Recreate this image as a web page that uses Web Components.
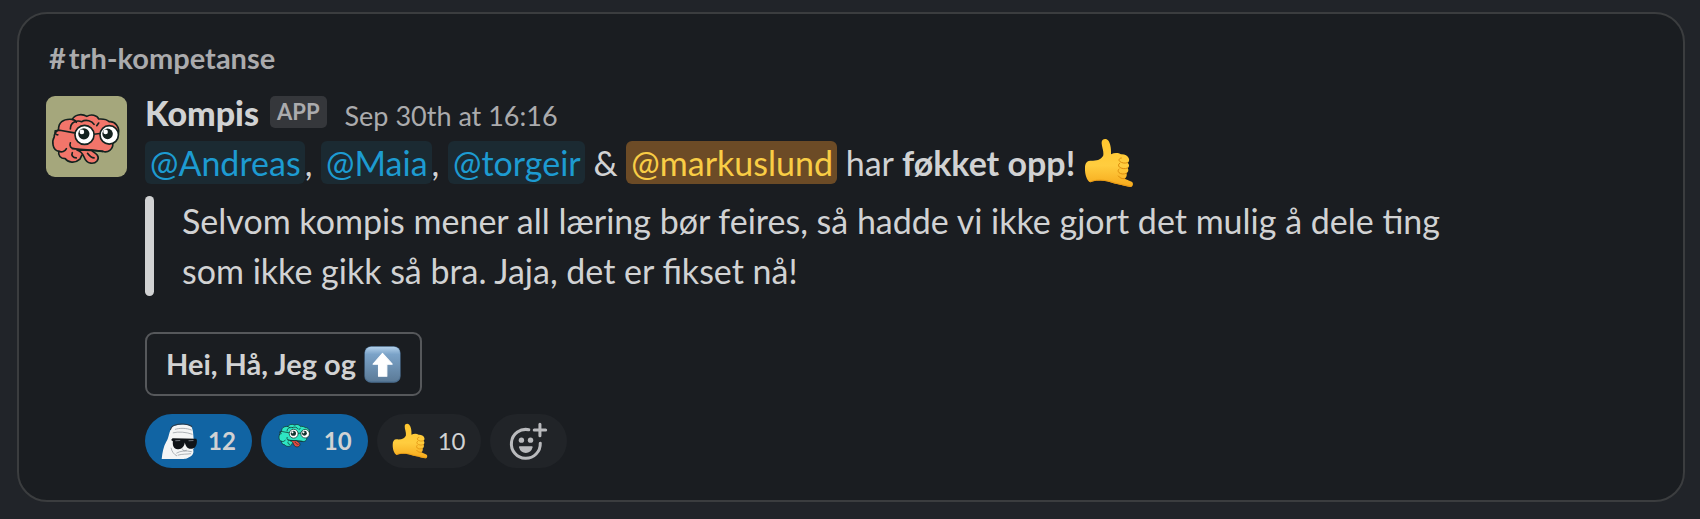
<!DOCTYPE html>
<html lang="no">
<head>
<meta charset="utf-8">
<meta name="viewport" content="width=device-width, initial-scale=1">
<title>#trh-kompetanse</title>
<style>
    body {
        margin: 0;
        padding: 12px 15px 18px 17px;
        background: #212429;
        color: #d1d2d3;
        font-family: Lato, "Liberation Sans", sans-serif;
        font-size: 34px;
        line-height: 50px;
    }
</style>
</head>
<body>

<kompis-card>
    <kompis-channel slot="channel" name="trh-kompetanse"></kompis-channel>
    <kompis-message author="Kompis" time="Sep 30th at 16:16">
        <kompis-mention>@Andreas</kompis-mention>, <kompis-mention>@Maia</kompis-mention>, <kompis-mention>@torgeir</kompis-mention> &amp; <kompis-mention me>@markuslund</kompis-mention> har <b>føkket opp!</b> <kompis-emoji name="shaka"></kompis-emoji>
        <kompis-quote slot="quote">Selvom kompis mener all læring bør feires, så hadde vi ikke gjort det mulig å dele ting som ikke gikk så bra. Jaja, det er fikset nå!</kompis-quote>
        <kompis-button slot="actions">Hei, Hå, Jeg og <kompis-emoji name="arrow"></kompis-emoji></kompis-button>
        <kompis-reaction slot="reactions" emoji="cool" count="12" active></kompis-reaction>
        <kompis-reaction slot="reactions" emoji="brain" count="10" active></kompis-reaction>
        <kompis-reaction slot="reactions" emoji="shaka" count="10"></kompis-reaction>
        <kompis-reaction slot="reactions" emoji="add"></kompis-reaction>
    </kompis-message>
</kompis-card>

<script>
// body of the brain, shared by the avatar and the small reaction
const brain = (fill, line, tongue) => `
    <g stroke="${line}" stroke-width="5" stroke-linejoin="round" stroke-linecap="round">
        <path fill="${fill}" d="M43 140C43 128 50 122 56 118C56 98 68 84 98 87C104 73 126 68 142 78C154 70 174 74 178 86C192 85 204 88 210 94C228 92 242 110 238 130C236 146 226 156 221 160C222 178 206 190 190 184L158 181C138 184 124 194 121 208C106 222 84 218 76 206C62 206 54 196 57 184C36 180 36 152 43 140Z"/>
        <path fill="${tongue}" d="M112 180C126 184 130 192 134 202C138 213 145 219 154 220C170 222 182 208 174 196C168 188 160 186 156 181Z"/>
        <path fill="none" d="M98 87C104 88 108 92 110 96M92 116C92 96 112 88 126 94M126 94C140 86 158 92 164 102M178 98L172 106M57 184C66 188 76 184 80 176M92 158C88 168 94 176 104 176M98 176C122 178 160 180 190 184M144 190C150 198 158 204 164 204M98 188C94 196 100 204 110 204"/>
        <path fill="none" d="M46 122L60 120L104 128M46 122C44 128 48 134 54 134M163 132L182 130"/>
    </g>
    <g stroke="${line}" stroke-width="5">
        <circle cx="135" cy="134" r="29" fill="#fff"/>
        <circle cx="210" cy="134" r="28" fill="#fff"/>
    </g>
    <circle cx="133" cy="131" r="17" fill="${line}"/>
    <circle cx="205" cy="131" r="16" fill="${line}"/>
    <circle cx="127" cy="125" r="7" fill="#fff"/>
    <circle cx="199" cy="125" r="7" fill="#fff"/>
`;

const icons = {
    avatar: `<svg viewBox="18 16 246 246"><rect x="18" y="16" width="246" height="246" fill="#a5a77c"/>${brain('#f2756a', '#14221f', '#f2756a')}</svg>`,

    brain: `<svg viewBox="26 64 242 242">${brain('#2ee6c3', '#12332f', '#e9483f')}</svg>`,

    shaka: `<svg viewBox="43 20 150 150">
        <defs>
            <linearGradient id="skin" x1="0" y1="0" x2="0" y2="1">
                <stop offset="0" stop-color="#ffc62e"/>
                <stop offset=".55" stop-color="#ffcd3f"/>
                <stop offset="1" stop-color="#f6a91c"/>
            </linearGradient>
        </defs>
        <path fill="url(#skin)" d="M96 32C97 22 109 20 115 27C122 35 125 50 124 69C134 64 146 64 154 69C164 68 174 73 177 80C180 86 178 92 174 94C180 99 179 107 174 110C178 116 176 123 170 126C173 131 171 138 165 142L186 151C193 155 190 167 182 167C170 167 157 161 146 159C128 156 115 149 100 148C84 147 72 148 62 153C52 149 45 129 46 109C46 96 52 87 63 88C82 90 96 84 101 72C103 58 95 44 96 32Z"/>
        <path fill="none" stroke="#dd8d0c" stroke-width="3" stroke-linecap="round" d="M174 94C165 97 156 95 150 90C146 86 149 80 155 80M174 110C165 114 155 112 149 107C145 103 146 98 150 96M170 126C162 130 153 128 148 124C144 120 145 116 148 113M165 142C157 143 150 140 146 134"/>
        <path fill="none" stroke="#e99a14" stroke-width="3" stroke-linecap="round" d="M62 151C74 146 88 146 102 147C118 148 132 155 148 158L182 165"/>
    </svg>`,

    arrow: `<svg viewBox="0 0 110 110">
        <defs>
            <linearGradient id="tile" x1="0" y1="0" x2="0" y2="1">
                <stop offset="0" stop-color="#b4d2ec"/>
                <stop offset=".22" stop-color="#7ba3c8"/>
                <stop offset="1" stop-color="#5c7b98"/>
            </linearGradient>
        </defs>
        <rect x="1" y="1" width="108" height="108" rx="20" fill="#4c6f90"/>
        <rect x="3" y="2" width="104" height="103" rx="18" fill="url(#tile)"/>
        <path fill="#fff" stroke="#fff" stroke-width="3" stroke-linejoin="round" d="M55 22L84 54H68V90H43V54H27Z"/>
    </svg>`,

    cool: `<svg viewBox="63 56 106 106">
        <path fill="#f4f5f5" d="M65 159C67 140 70 124 78 110C86 98 86 80 94 68C104 59 136 57 149 65C156 74 155 88 157 104C162 116 159 126 155 132C159 144 150 153 138 157C130 160 124 159 116 159Z"/>
        <g fill="none" stroke="#8f959a" stroke-width="2" stroke-linecap="round">
            <path d="M104 74C116 70 136 70 150 76M98 84C112 80 136 82 152 88M108 142C118 136 134 134 150 138M112 148C124 144 138 146 148 144M92 128C94 138 100 146 108 150M124 130L128 136L136 134"/>
        </g>
        <path fill="none" stroke="#2b3a48" stroke-width="3" d="M90 76C92 68 96 64 104 62C114 58 138 57 152 66"/>
        <path fill="#101418" d="M92 105L96 100L164 101L166 106C166 122 160 130 148 130C138 130 134 122 131 112C130 124 122 132 111 131C99 130 96 121 97 108Z"/>
        <path fill="none" stroke="#70767c" stroke-width="3" d="M104 107L118 106M142 107L156 106"/>
    </svg>`,

    add: `<svg viewBox="420 43 116 116">
        <g fill="none" stroke="#b9babd" stroke-width="9" stroke-linecap="round">
            <path d="M479 66A43 43 0 1 0 513 106"/>
            <path d="M512 50V84M495 67H529"/>
        </g>
        <g fill="#b9babd">
            <circle cx="457" cy="97" r="8"/>
            <circle cx="484" cy="97" r="8"/>
            <path d="M452 115H488Q491 115 490 119C487 130 480 135 470 135C460 135 453 130 450 119Q449 115 452 115Z"/>
        </g>
    </svg>`
};

class KompisElement extends HTMLElement {
    constructor() {
        super();
        this.attachShadow({ mode: 'open' });
    }

    connectedCallback() {
        this.shadowRoot.innerHTML = this.render().trim();
    }
}

class KompisCard extends KompisElement {
    render() {
        return `
            <style>
                :host {
                    display: block;
                    padding: 26px 27px 32px;
                    border: 2px solid #3b3d3f;
                    border-radius: 30px;
                    background: #1a1d21;
                }
            </style>
            <slot name="channel"></slot>
            <slot></slot>
        `;
    }
}

class KompisChannel extends KompisElement {
    render() {
        return `
            <style>
                :host {
                    display: block;
                    margin-bottom: 17px;
                    padding-left: 3px;
                    font-size: 29px;
                    font-weight: 700;
                    line-height: 36px;
                }
                a {
                    display: inline-flex;
                    gap: 3px;
                    color: #ababad;
                    text-decoration: none;
                }
            </style>
            <a href="#"><span>#</span><span>${this.getAttribute('name')}</span></a>
        `;
    }
}

class KompisMessage extends KompisElement {
    render() {
        return `
            <style>
                :host {
                    display: grid;
                    grid-template-columns: 81px minmax(0, 1fr);
                    column-gap: 18px;
                }
                .avatar {
                    height: 81px;
                    margin-top: 3px;
                    border-radius: 9px;
                    overflow: hidden;
                }
                .avatar svg {
                    display: block;
                }
                header {
                    display: flex;
                    align-items: baseline;
                    height: 45px;
                    line-height: 40px;
                }
                .author {
                    color: #d1d2d3;
                    font-weight: 900;
                    text-decoration: none;
                }
                .badge {
                    align-self: flex-start;
                    margin: 3px 18px 0 11px;
                    padding: 0 7px;
                    border-radius: 5px;
                    background: #35373b;
                    color: #ababad;
                    font-size: 22px;
                    font-weight: 700;
                    line-height: 32px;
                }
                time {
                    color: #ababad;
                    font-size: 27px;
                }
                .text {
                    margin-bottom: 8px;
                }
                .actions {
                    margin: 36px 0 18px;
                }
                .reactions {
                    display: flex;
                    flex-wrap: wrap;
                    gap: 9px;
                }
            </style>
            <div class="avatar">${icons.avatar}</div>
            <div>
                <header>
                    <a class="author" href="#">${this.getAttribute('author')}</a>
                    <span class="badge">APP</span>
                    <time>${this.getAttribute('time')}</time>
                </header>
                <div class="text"><slot></slot></div>
                <slot name="quote"></slot>
                <div class="actions"><slot name="actions"></slot></div>
                <div class="reactions"><slot name="reactions"></slot></div>
            </div>
        `;
    }
}

class KompisMention extends KompisElement {
    render() {
        return `
            <style>
                :host {
                    display: inline;
                }
                a {
                    padding: 1px 4px 1px 5px;
                    border-radius: 6px;
                    background: #1b2a32;
                    color: #1d9bd1;
                    text-decoration: none;
                }
                :host([me]) a {
                    background: #6c4b26;
                    color: #f9cd45;
                }
            </style>
            <a href="#"><slot></slot></a>
        `;
    }
}

class KompisEmoji extends KompisElement {
    render() {
        return `
            <style>
                :host {
                    display: inline-block;
                    width: 50px;
                    height: 50px;
                    vertical-align: bottom;
                }
                :host([name="arrow"]) {
                    width: 37px;
                    height: 37px;
                }
                svg {
                    display: block;
                    width: 100%;
                    height: 100%;
                }
            </style>
            ${icons[this.getAttribute('name')]}
        `;
    }
}

class KompisQuote extends KompisElement {
    render() {
        return `
            <style>
                :host {
                    display: flex;
                    gap: 28px;
                    max-width: 1330px;
                }
                .bar {
                    flex: none;
                    width: 9px;
                    border-radius: 5px;
                    background: #d1d2d3;
                }
                blockquote {
                    margin: 0;
                }
            </style>
            <div class="bar"></div>
            <blockquote><slot></slot></blockquote>
        `;
    }
}

class KompisButton extends KompisElement {
    render() {
        return `
            <style>
                :host {
                    display: flex;
                }
                button {
                    display: flex;
                    align-items: center;
                    gap: 8px;
                    height: 64px;
                    padding: 0 19px;
                    border: 2px solid #56585b;
                    border-radius: 9px;
                    background: #1a1d21;
                    color: #d1d2d3;
                    font: 700 29px/36px Lato, "Liberation Sans", sans-serif;
                    cursor: pointer;
                }
            </style>
            <button type="button"><slot></slot></button>
        `;
    }
}

class KompisReaction extends KompisElement {
    render() {
        const count = this.getAttribute('count');
        return `
            <style>
                :host {
                    display: block;
                }
                button {
                    display: flex;
                    align-items: center;
                    gap: 10px;
                    height: 54px;
                    padding: 0 15px;
                    border: 0;
                    border-radius: 27px;
                    background: #212428;
                    color: #d1d2d3;
                    font: 400 24px/32px Lato, "Liberation Sans", sans-serif;
                    cursor: pointer;
                }
                svg {
                    display: block;
                    width: 36px;
                    height: 36px;
                }
                :host([active]) button {
                    padding: 0 16px;
                    background: #1164a3;
                    font-weight: 700;
                }
                :host([active]) svg {
                    width: 37px;
                    height: 37px;
                }
                :host([emoji="add"]) button {
                    padding: 0 19px;
                }
                :host([emoji="add"]) svg {
                    width: 39px;
                    height: 39px;
                }
            </style>
            <button type="button" aria-label="${this.getAttribute('emoji')}">
                ${icons[this.getAttribute('emoji')]}
                ${count ? `<span>${count}</span>` : ''}
            </button>
        `;
    }
}

customElements.define('kompis-card', KompisCard);
customElements.define('kompis-channel', KompisChannel);
customElements.define('kompis-message', KompisMessage);
customElements.define('kompis-mention', KompisMention);
customElements.define('kompis-emoji', KompisEmoji);
customElements.define('kompis-quote', KompisQuote);
customElements.define('kompis-button', KompisButton);
customElements.define('kompis-reaction', KompisReaction);
</script>
</body>
</html>
